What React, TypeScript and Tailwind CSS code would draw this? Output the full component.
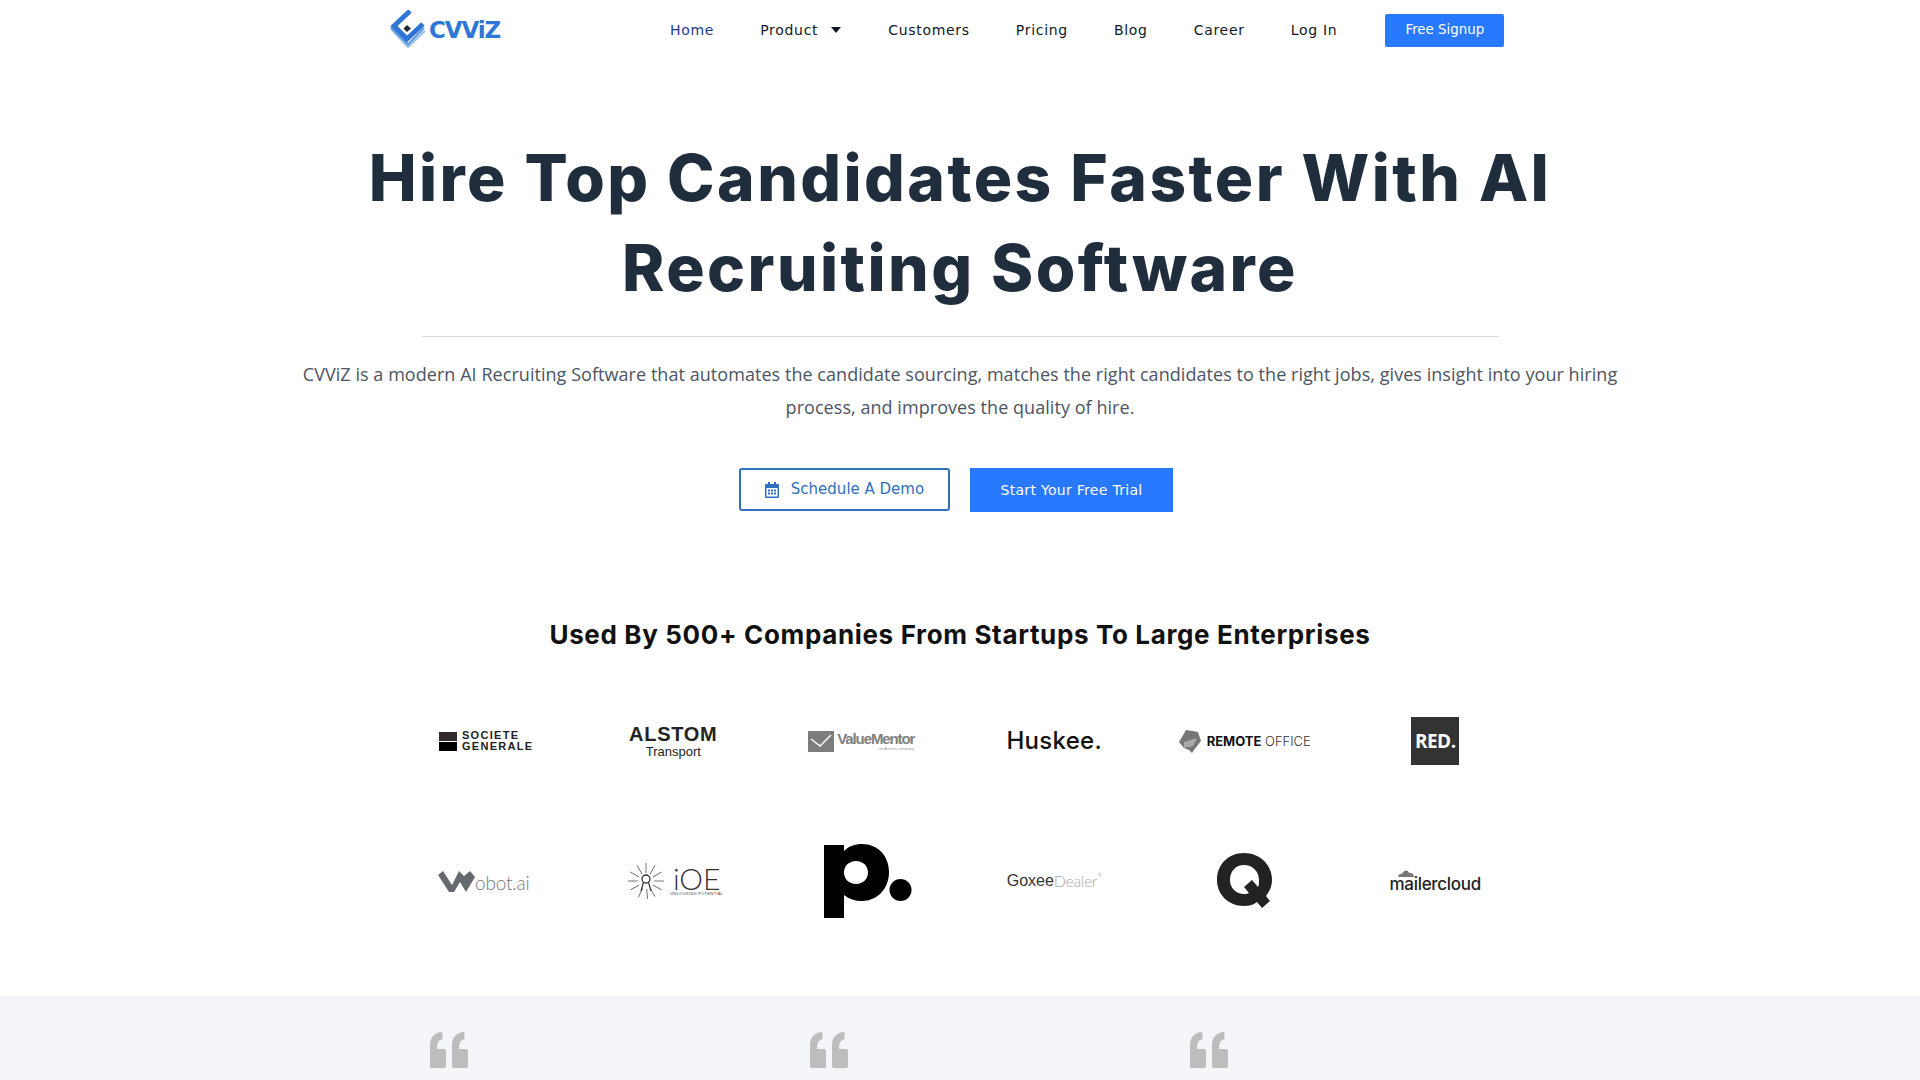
import React from "react";

const nav = "font-['DejaVu_Sans',sans-serif] text-[14px] tracking-[0.7px] text-[#111827] whitespace-nowrap";
const head = "font-['Inter',sans-serif]";

function Logo() {
  return (
    <div className="flex items-center gap-[3px] w-[116px]">
      <svg width="36" height="40" viewBox="0 0 36 40" className="shrink-0">
        <path d="M19 3 L2 20 L18 37 L35 21" fill="none" stroke="#9cc4ec" strokeWidth="2" />
        <path d="M19 2 L1.500 18 L18 34.500 L34 18" fill="none" stroke="#5b9ae0" strokeWidth="2" />
        <path d="M20 1 L4 16 L17 29 L33 14" fill="none" stroke="#2f76d6" strokeWidth="5" />
        <path d="M17 15 L21 18.500 L17 22 L13.500 18.500 Z" fill="#1f2937" />
      </svg>
      <span className="relative font-['DejaVu_Sans',sans-serif] font-bold text-[23px] leading-none tracking-[-1.100px] text-[#2f76d6] mt-[1px]">CVViZ</span>
    </div>
  );
}

function Calendar() {
  return (
    <svg width="14" height="16" viewBox="0 0 14 16" fill="#2f6fbe">
      <path d="M3 0h2v2h4V0h2v2h2a1 1 0 0 1 1 1v12a1 1 0 0 1-1 1H1a1 1 0 0 1-1-1V3a1 1 0 0 1 1-1h2zM1.500 6v8.500h11V6z" />
      <path d="M3 7.500h2v2H3zM6 7.500h2v2H6zM9 7.500h2v2H9zM3 10.500h2v2H3zM6 10.500h2v2H6zM9 10.500h2v2H9z" />
    </svg>
  );
}

function Quote() {
  const d = "M2 36a2 2 0 0 1-2-2V13C0 6 4 1 11 0c1 0 1.500 .5 1.500 1.500V6c0 1-.5 1.500-1.500 1.800C8 9 7 12 7 17H14a2 2 0 0 1 2 2V34a2 2 0 0 1-2 2z";
  return (
    <svg width="38" height="36" viewBox="0 0 38 36" fill="#bdbdbd">
      <path d={d} />
      <path d={d} transform="translate(22 0)" />
    </svg>
  );
}

function Cell({ children }: { children: React.ReactNode }) {
  return <div className="h-[140px] flex items-center justify-center">{children}</div>;
}

function Societe() {
  return (
    <div className="flex items-center gap-[5px] ml-[7px]">
      <div className="w-[18px] h-[19px] flex flex-col">
        <div className="h-[9px] bg-[#332b2b]" />
        <div className="h-[1px] bg-white" />
        <div className="h-[9px] bg-black" />
      </div>
      <div className="font-['Liberation_Sans',sans-serif] text-[11px] leading-[11px] font-bold tracking-[1.300px] text-[#222] whitespace-nowrap">
        SOCIETE<br />GENERALE
      </div>
    </div>
  );
}

function Alstom() {
  return (
    <div className="flex flex-col items-center text-[#222]">
      <div className="font-['Liberation_Sans',sans-serif] font-bold text-[20px] leading-[20px] tracking-[0.7px]">ALSTOM</div>
      <div className="font-['Liberation_Sans',sans-serif] text-[13px] leading-[15px]">Transport</div>
    </div>
  );
}

function ValueMentor() {
  return (
    <div className="flex items-start gap-[3px] mr-[5px]">
      <svg width="26" height="21" viewBox="0 0 26 21">
        <rect width="26" height="21" fill="#7d7d7d" />
        <path d="M3 8 L12 15 L23 4" fill="none" stroke="#fff" strokeWidth="1.500" />
      </svg>
      <div className="flex flex-col items-end">
        <div className="font-['Liberation_Sans',sans-serif] font-bold text-[15px] leading-[15px] tracking-[-1.100px] text-[#808080] whitespace-nowrap">ValueMentor</div>
        <div className="font-['Liberation_Sans',sans-serif] text-[4px] leading-[5px] text-[#999]">an Avertra company</div>
      </div>
    </div>
  );
}

function Remote() {
  return (
    <div className="flex items-center gap-[6px]">
      <svg width="22" height="23" viewBox="0 0 22 23">
        <path d="M7 0 L19 2 L22 11 L15 20 L13 23 L10 20 L5 18 L0 12 Z" fill="#777" />
        <path d="M5 12 L18 8 L14 16 L5 18 Z" fill="#aaa" />
      </svg>
      <div className="font-['Inter',sans-serif] text-[13px] leading-none whitespace-nowrap">
        <span className="font-bold text-[#111]">REMOTE</span> <span className="font-light text-[#333]">OFFICE</span>
      </div>
    </div>
  );
}

function Wobot() {
  return (
    <div className="flex items-end ml-[2px]">
      <svg width="37" height="21" viewBox="0 0 37 21">
        <path d="M0 4 L5 0 L14 14 L21 0 L26 5 L32 0 L37 6 L28 21 L22 11 L16 21 L11 21 Z" fill="#666a70" />
      </svg>
      <span className="font-['Lato',sans-serif] font-light text-[19px] leading-[19px] text-[#777] tracking-[-0.2px]">obot.ai</span>
    </div>
  );
}

function Ioe() {
  const rays = [0, 30, 60, 85, 115, 150, 180, 210, 240, 270, 300, 330];
  return (
    <div className="flex items-center gap-[5px] ml-[4px]">
      <svg width="38" height="38" viewBox="-19 -19 38 38">
        {rays.map((r) => (
          <line key={r} x1="8" y1="0" x2="18" y2="0" stroke="#555" strokeWidth="0.800" transform={`rotate(${r})`} />
        ))}
        <circle cx="0" cy="-2" r="4" fill="none" stroke="#333" strokeWidth="1.300" />
        <path d="M-2.500 1 L-5 10 M2.500 1 L5 10" stroke="#333" strokeWidth="1.200" />
      </svg>
      <div className="flex flex-col items-center">
        <span className="font-['Lato',sans-serif] font-light text-[30px] leading-[25px] text-[#333]">iOE</span>
        <span className="font-['Liberation_Sans',sans-serif] text-[4px] leading-[5px] tracking-[0.3px] text-[#444] whitespace-nowrap">UNLOCKING POTENTIAL</span>
      </div>
    </div>
  );
}

function PLogo() {
  return (
    <svg width="88" height="75" viewBox="0 0 88 75" className="ml-[8px]">
      <path d="M0 1 L20 1 L20 7 C25 2 31 0 38 0 C54 0 65 12 65 28 C65 45 53 57 38 57 C31 57 25 55 20 51 L20 74 L0 74 Z M32 17 C25 17 20 22 20 28.500 C20 35 25 40 32 40 C39 40 44 35 44 28.500 C44 22 39 17 32 17 Z" fill="#000" fillRule="evenodd" />
      <circle cx="76.500" cy="46" r="11" fill="#000" />
    </svg>
  );
}

function Goxee() {
  return (
    <div className="text-[16px] leading-none whitespace-nowrap flex items-start">
      <span className="font-['Liberation_Sans',sans-serif] text-[#333]">Goxee</span>
      <span className="text-[#aaa] font-['Lato',sans-serif] font-light tracking-[-0.4px]">Dealer</span>
      <span className="font-['Liberation_Sans',sans-serif] text-[#aaa] text-[5px] ml-[1px]">®</span>
    </div>
  );
}

function QLogo() {
  return (
    <svg width="56" height="56" viewBox="0 0 56 56">
      <path d="M27 0 C42 0 55 11 55 27 C55 34 52 39 49 43 L53 48 L45 55 L40 49 C36 52 32 53 27 53 C12 53 0 42 0 27 C0 11 12 0 27 0 Z M27 12 C19 12 13 18 13 27 C13 35 19 41 27 41 C29 41 30 41 32 40 L27 34 L35 27 L41 34 C42 32 42 30 42 27 C42 18 35 12 27 12 Z" fill="#222" fillRule="evenodd" />
    </svg>
  );
}

function Mailer() {
  return (
    <div className="flex flex-col items-start">
      <svg width="17" height="7" viewBox="0 0 26 7" preserveAspectRatio="none" className="ml-[8px]">
        <path d="M0 7 C1 4 4 3 6 4 C8 0 15 -1 17 3 C20 2 24 4 25 7 Z" fill="#777" />
      </svg>
      <span className="font-['Inter',sans-serif] font-medium text-[17px] leading-[15px] tracking-[-0.3px] text-[#222]">mailercloud</span>
    </div>
  );
}

export default function App() {
  return (
    <div className="bg-white h-[1080px] overflow-hidden flex flex-col">
      <header className="h-[60px] w-[1140px] mx-auto flex items-center shrink-0">
        <Logo />
        <nav className="flex items-center ml-[164px] h-full gap-[46px]">
          <span className={nav + " !text-[#1e3a8a]"}>Home</span>
          <span className={nav + " flex items-center gap-[13px] mr-[1px]"}>
            Product
            <span className="w-0 h-0 border-x-[5px] border-x-transparent border-t-[6px] border-t-[#111827]" />
          </span>
          <span className={nav}>Customers</span>
          <span className={nav}>Pricing</span>
          <span className={nav}>Blog</span>
          <span className={nav}>Career</span>
          <span className={nav}>Log In</span>
          <span className="bg-[#2979ff] rounded-[2px] w-[119px] h-[33px] flex items-center justify-center text-white text-[13.400px] font-['DejaVu_Sans',sans-serif] ml-[2px]">Free Signup</span>
        </nav>
      </header>

      <main className="flex flex-col items-center">
        <h1 className={head + " text-[64px] leading-[90px] font-extrabold tracking-[2.450px] text-[#1f2d3d] text-center w-[1300px] mt-[73px]"}>
          Hire Top Candidates Faster With AI
          <br />
          Recruiting Software
        </h1>
        <div className="w-[1077px] h-px bg-[#d9d9d9] mt-[23px]" />
        <p className="font-['Open_Sans',sans-serif] text-[18px] leading-[33px] tracking-[0.05px] text-[#4b5563] text-center w-[1340px] mt-[21px]">
          CVViZ is a modern AI Recruiting Software that automates the candidate sourcing, matches the right candidates to the right jobs, gives insight into your hiring
          <br />
          process, and improves the quality of hire.
        </p>
        <div className="flex items-start gap-[20px] mt-[44px] -translate-x-[4px]">
          <span className="w-[211px] h-[43px] border-2 border-[#2f6fbe] rounded-[3px] flex items-center justify-center gap-[12px] text-[#2f6fbe] text-[15px] font-['DejaVu_Sans',sans-serif]">
            <Calendar /> Schedule A Demo
          </span>
          <span className="w-[203px] h-[44px] bg-[#2979ff] flex items-center justify-center text-white text-[14px] tracking-[0.3px] font-['DejaVu_Sans',sans-serif]">
            Start Your Free Trial
          </span>
        </div>
        <h2 className={head + " text-[26px] leading-[36px] font-bold tracking-[0.65px] text-[#111] mt-[105px]"}>
          Used By 500+ Companies From Startups To Large Enterprises
        </h2>
        <div className="grid grid-cols-6 w-[1143px] mt-[18px] -translate-x-[1px]">
          <Cell><Societe /></Cell>
          <Cell><Alstom /></Cell>
          <Cell><ValueMentor /></Cell>
          <div className="h-[140px] flex items-center justify-center font-['Inter',sans-serif] font-medium text-[24px] tracking-[0.3px] text-[#111]">Huskee.</div>
          <Cell><Remote /></Cell>
          <Cell>
            <div className="w-[48px] h-[48px] bg-[#333] flex items-center justify-center text-white font-['Open_Sans',sans-serif] font-bold text-[19px] tracking-[-0.5px]">RED.</div>
          </Cell>
          <Cell><Wobot /></Cell>
          <Cell><Ioe /></Cell>
          <Cell><PLogo /></Cell>
          <Cell><Goxee /></Cell>
          <Cell><QLogo /></Cell>
          <Cell><Mailer /></Cell>
        </div>
      </main>

      <section className="mt-auto h-[84px] bg-[#f3f5f9] shrink-0">
        <div className="w-[1140px] mx-auto grid grid-cols-3 pt-[36px]">
          <div className="pl-[40px]"><Quote /></div>
          <div className="pl-[40px]"><Quote /></div>
          <div className="pl-[40px]"><Quote /></div>
        </div>
      </section>
    </div>
  );
}
